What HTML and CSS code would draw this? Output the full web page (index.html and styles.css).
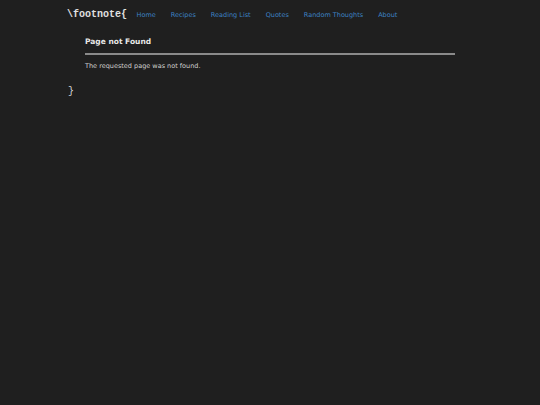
FILE: index.html
```html
<!DOCTYPE html>
<html lang="en">
<head>
    <meta charset="UTF-8">
    <meta name="viewport" content="width=device-width, initial-scale=1.0">
    <title>Page not Found</title>
    <link rel="stylesheet" href="styles.css">
</head>
<body>
    <div class="wrapper">
        <header class="site-header">
            <a class="logo" href="#">\footnote{</a>
            <nav class="nav">
                <a href="#">Home</a>
                <a href="#">Recipes</a>
                <a href="#">Reading List</a>
                <a href="#">Quotes</a>
                <a href="#">Random Thoughts</a>
                <a href="#">About</a>
            </nav>
        </header>

        <main class="content">
            <h1>Page not Found</h1>
            <p>The requested page was not found.</p>
        </main>

        <footer class="site-footer">}</footer>
    </div>
</body>
</html>
```

FILE: styles.css
```css
* {
    box-sizing: border-box;
    margin: 0;
    padding: 0;
}

body {
    font-family: 'DejaVu Sans', Verdana, sans-serif;
    background: #1f1f1f;
    color: #d8d8d8;
    min-height: 100vh;
}

a {
    text-decoration: none;
}

.wrapper {
    width: 406px;
    margin: 0 auto;
}

.site-header {
    display: flex;
    align-items: baseline;
    padding-top: 9px;
    height: 31px;
}

.logo {
    font-family: 'Liberation Mono', 'Courier New', monospace;
    font-weight: bold;
    font-size: 10px;
    color: #e0e0e0;
    margin-right: 2px;
}

.nav {
    display: flex;
}

.nav a {
    font-size: 6.5px;
    color: #3d82c4;
    padding: 0 7.5px;
}

.content {
    padding: 6px 18px 0;
}

.content h1 {
    font-size: 7.5px;
    font-weight: bold;
    color: #e8e8e8;
    padding-bottom: 7px;
    border-bottom: 2px solid #8a8a8a;
    margin-bottom: 7px;
}

.content p {
    font-size: 6.5px;
    color: #d0d0d0;
}

.site-footer {
    font-family: 'Liberation Mono', 'Courier New', monospace;
    font-size: 10px;
    color: #d8d8d8;
    padding: 16px 0 0 1px;
}
```
